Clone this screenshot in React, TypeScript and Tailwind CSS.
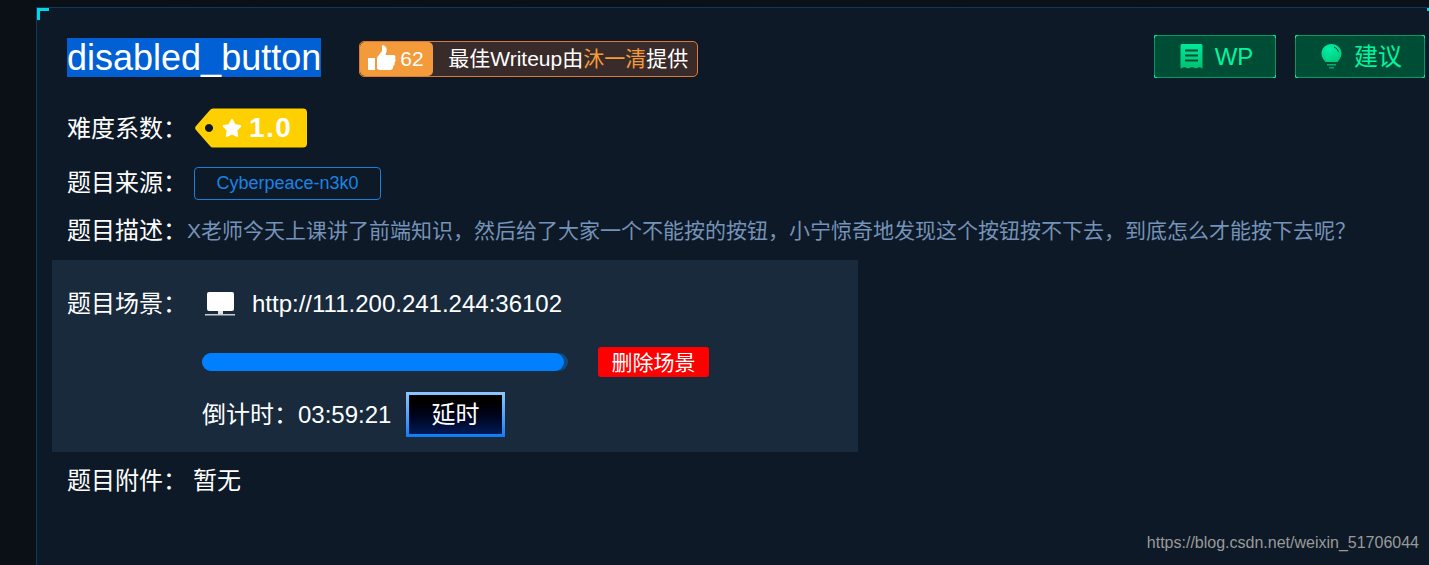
import { FaStar } from 'react-icons/fa'

const FONT = 'font-["Liberation_Sans","Noto_Sans_CJK_SC",sans-serif]'

function ThumbIcon() {
  return (
    <svg className="-mt-[2px]" width="28" height="27" viewBox="0 0 28 27" fill="#fff">
      <rect x="0" y="13" width="7" height="12" />
      <path d="M9 12.500 14 6V1.500C14 .5 15 0 16 .5 18.500 1.500 19 4 18.500 6.500L17.500 10H25.500C27.500 10 28 12 27 13.500 28 15 27.500 16.500 26.500 17.500 27 19 26.500 20.500 25 21.500 25.500 23.500 24 25 22 25H14C11.500 25 10 24.500 9 23.500Z" />
    </svg>
  )
}

function ReceiptIcon() {
  return (
    <svg width="23" height="25" viewBox="0 0 23 25">
      <defs>
        <linearGradient id="wpg" x1="0" y1="0" x2="0" y2="1">
          <stop offset="0" stopColor="#00e89a" />
          <stop offset="1" stopColor="#00c070" />
        </linearGradient>
      </defs>
      <path
        fill="url(#wpg)"
        fillRule="evenodd"
        d="M2 0H21a1.500 1.500 0 0 1 1.500 1.500V24.500L19.500 23 16 24.500 12 23 8 24.500 4.500 23 .5 24.500V1.500A1.500 1.500 0 0 1 2 0ZM5 5.500V7.500H18V5.500ZM5 10.500V12.500H18V10.500ZM5 15.500V17.500H18V15.500Z"
      />
    </svg>
  )
}

function BulbIcon() {
  return (
    <svg width="21" height="25" viewBox="0 0 21 25">
      <defs>
        <radialGradient id="blb" cx="0.4" cy="0.3" r="0.8">
          <stop offset="0" stopColor="#00f0a8" />
          <stop offset="1" stopColor="#00c878" />
        </radialGradient>
      </defs>
      <path fill="url(#blb)" d="M10.500 0C4.700 0 .5 4.300 .5 9.600c0 3.700 2.100 6.100 4 8.400h12c1.900-2.300 4-4.700 4-8.400C20.500 4.300 16.300 0 10.500 0Z" />
      <path fill="none" stroke="#004d35" strokeWidth="1" d="M13 3.200c2.400.6 4 2.500 4.300 4.600" />
      <rect x="6" y="20" width="9" height="1.500" fill="#00b070" />
      <rect x="8" y="23" width="5" height="1.500" fill="#00a068" />
    </svg>
  )
}

function MonitorIcon() {
  return (
    <svg width="30" height="25" viewBox="0 0 30 25">
      <rect x="2" y="0" width="27" height="19" rx="2" fill="#fff" />
      <path d="M13 19h5v3h-5z" fill="#dfe3e8" />
      <rect x="0" y="22" width="30" height="1.500" fill="#c6ccd4" />
    </svg>
  )
}

function GreenButton({ icon, label, width }: { icon: React.ReactNode; label: string; width: string }) {
  return (
    <button className={`relative flex h-[43px] items-center justify-center gap-[12px] rounded-[2px] border border-[#009a64] bg-[#004d35] pl-[3px] text-[24px] text-[#00f5a2] ${width}`}>
      <span className="absolute -left-px -top-px h-[3px] w-[3px] rounded-tl-[2px] border-l border-t border-[#00f5a2]" />
      <span className="absolute -right-px -top-px h-[3px] w-[3px] rounded-tr-[2px] border-r border-t border-[#00f5a2]" />
      <span className="absolute -bottom-px -left-px h-[3px] w-[3px] rounded-bl-[2px] border-b border-l border-[#00f5a2]" />
      <span className="absolute -bottom-px -right-px h-[3px] w-[3px] rounded-br-[2px] border-b border-r border-[#00f5a2]" />
      {icon}
      <span>{label}</span>
    </button>
  )
}

export default function App() {
  return (
    <div className={`relative h-[565px] w-[1429px] overflow-hidden bg-gradient-to-r from-[#0a1016] to-[#0a1119] pl-[36px] pt-[7px] ${FONT}`}>
      <div className="relative h-[558px] border-l border-t border-[#0c3a5e] bg-[#0d1926] text-white">
        {/* corner marks */}
        <div className="absolute left-0 top-0 h-[12px] w-[12px] border-l-[3px] border-t-[3px] border-[#00d8e8]" />
        <div className="absolute right-0 top-0 h-[3px] w-[2px] bg-[#00d8e8]" />

        <div className="flex items-start pl-[30px] pr-[4px] pt-[30px]">
          <h1 className="mr-[38px] bg-[#0060d4] text-[36px] leading-[39px] font-normal">disabled_button</h1>
          <div className="mt-[3px] flex h-[36px] w-[339px] items-center rounded-[5px] border border-[#e07a30] bg-[#3a2b2b]">
            <div className="flex h-[34px] w-[73px] items-center gap-[4px] rounded-[5px] bg-[#f39b3a] pl-[8px] text-[21px]">
              <ThumbIcon />
              <span>62</span>
            </div>
            <span className="ml-[15px] whitespace-nowrap text-[21px]">
              最佳Writeup由<span className="text-[#f39b3a]">沐一清</span>提供
            </span>
          </div>
          <div className="ml-auto flex gap-[19px]">
            <GreenButton icon={<ReceiptIcon />} label="WP" width="w-[122px] -mt-[3px]" />
            <GreenButton icon={<BulbIcon />} label="建议" width="w-[130px] -mt-[3px]" />
          </div>
        </div>

        <div className="mt-[30px] flex items-center pl-[30px]">
          <span className="w-[127px] text-[24px] leading-[42px]">难度系数：</span>
          <div className="relative -mt-[2px] ml-[1px] flex h-[40px] w-[113px] items-center pl-[27px]">
            <svg className="absolute left-0 top-0" width="113" height="40" viewBox="0 0 113 40">
              <path fill="#ffd000" fillRule="evenodd" d="M15 2Q16 .5 18 .5H108a4 4 0 0 1 4 4V35.500a4 4 0 0 1-4 4H18Q16 39.500 15 38L1 22a3 3 0 0 1 0-4ZM14 16a4 4 0 1 0 .01 0Z" />
            </svg>
            <FaStar className="relative h-[20px] w-[20px] text-white" />
            <span className="relative ml-[7px] text-[28px] font-bold tracking-[1.500px]">1.0</span>
          </div>
        </div>

        <div className="mt-[15px] flex items-center pl-[30px]">
          <span className="w-[127px] text-[24px]">题目来源：</span>
          <span className="flex h-[33px] w-[187px] items-center justify-center rounded-[4px] border border-[#1a7fd8] text-[18px] text-[#1a84e4]">Cyberpeace-n3k0</span>
        </div>

        <div className="mt-[12px] flex items-center pl-[30px]">
          <span className="w-[120px] text-[24px]">题目描述：</span>
          <span className="whitespace-nowrap text-[21px] text-[#7592b8]">X老师今天上课讲了前端知识，然后给了大家一个不能按的按钮，小宁惊奇地发现这个按钮按不下去，到底怎么才能按下去呢？</span>
        </div>

        <div className="ml-[15px] mt-[11px] h-[192px] w-[806px] bg-[#182a3c] pl-[15px] pt-[26px]">
          <div className="flex items-center">
            <span className="w-[138px] text-[24px]">题目场景：</span>
            <MonitorIcon />
            <span className="ml-[17px] text-[24px]">http://111.200.241.244:36102</span>
          </div>
          <div className="ml-[135px] mt-[25px] flex items-center">
            <div className="h-[18px] w-[366px] rounded-full bg-[#0e4a80]">
              <div className="h-[18px] w-[362px] rounded-full bg-[#0080ff]" />
            </div>
            <button className="ml-[30px] h-[30px] w-[111px] rounded-[3px] bg-[#ff0000] text-[21px]">删除场景</button>
          </div>
          <div className="ml-[135px] mt-[15px] flex items-center">
            <span className="w-[204px] text-[24px]">倒计时：03:59:21</span>
            <div className="h-[45px] w-[99px] bg-gradient-to-b from-[#8cc6ff] to-[#0a7cf5] p-[3px]">
              <button className="h-full w-full bg-gradient-to-b from-[#000000] to-[#001a55] text-[24px]">延时</button>
            </div>
          </div>
        </div>

        <div className="mt-[11px] flex items-center pl-[30px]">
          <span className="w-[126px] text-[24px]">题目附件：</span>
          <span className="text-[24px]">暂无</span>
        </div>
      </div>

      <span className="absolute bottom-[10px] right-[10px] text-[16px] text-[#9a9a9a]">https://blog.csdn.net/weixin_51706044</span>
    </div>
  )
}
